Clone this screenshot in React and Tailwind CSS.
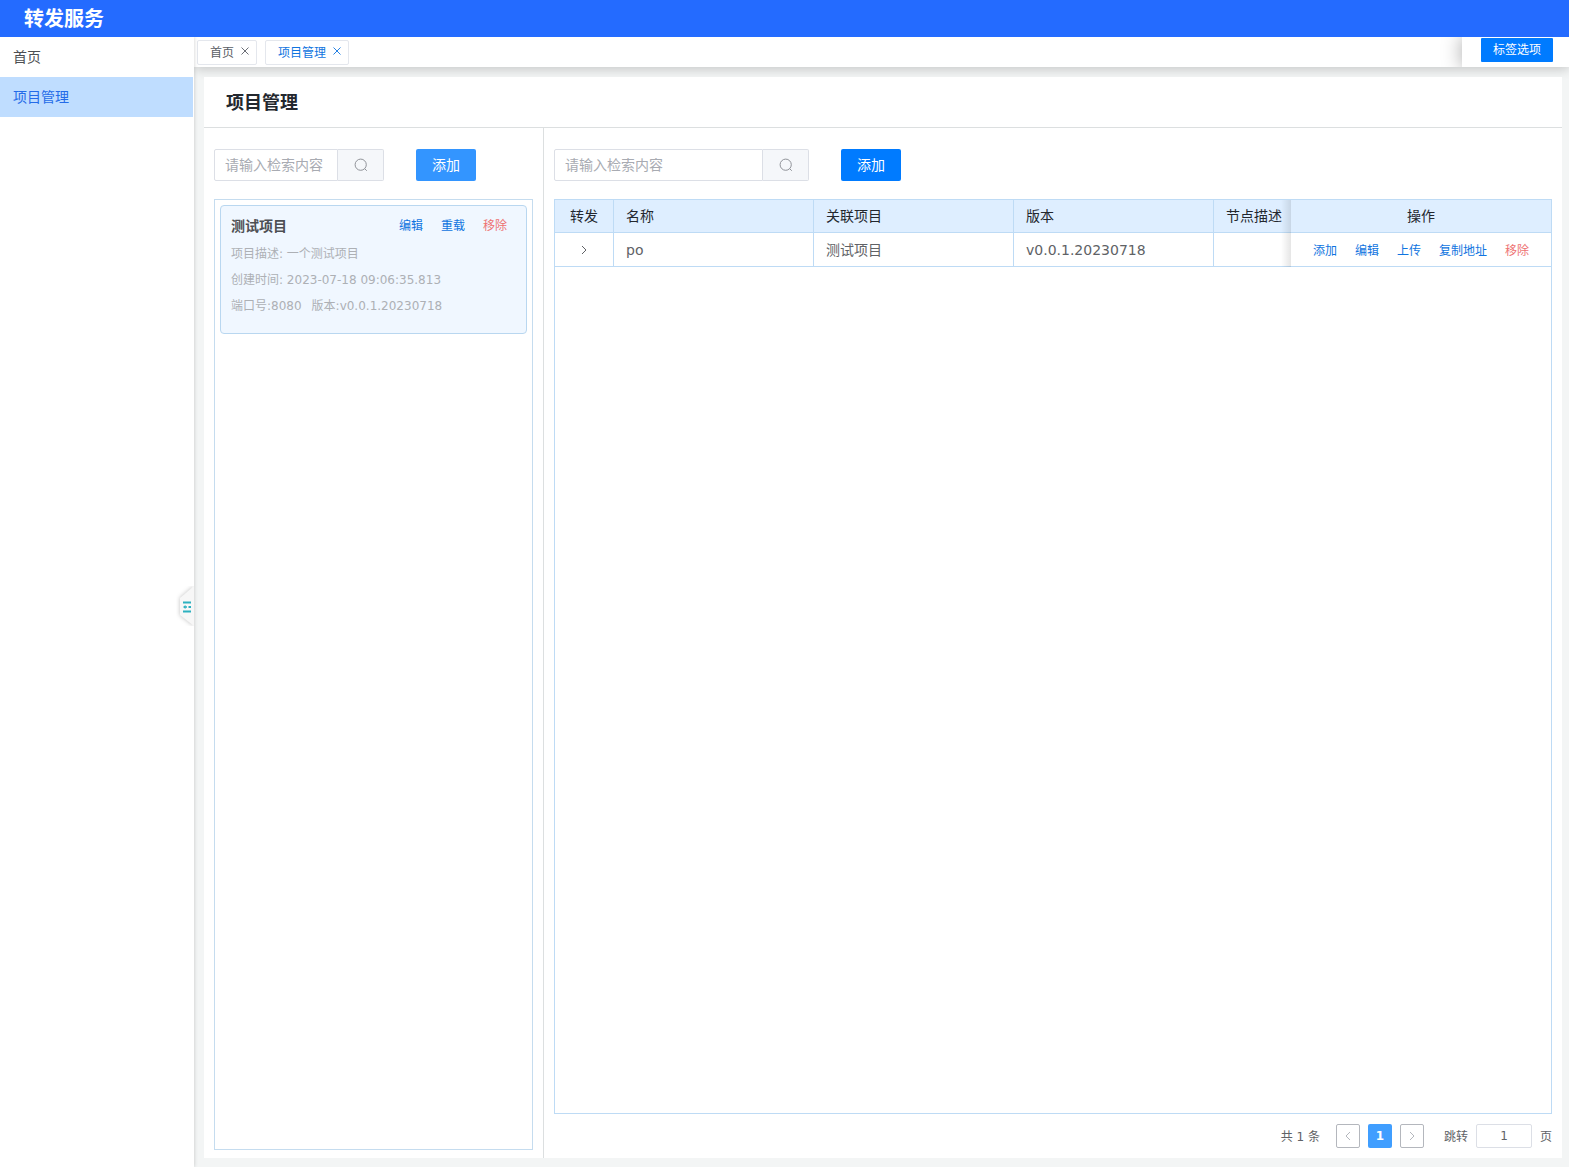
import { useState } from "react";

const navItems = ["首页", "项目管理"];

const columns = [
  { title: "转发", width: "w-[59px]", align: "text-center" },
  { title: "名称", width: "w-[200px]", align: "text-left" },
  { title: "关联项目", width: "w-[200px]", align: "text-left" },
  { title: "版本", width: "w-[200px]", align: "text-left" },
  { title: "节点描述", width: "", align: "text-left" },
];

const rowActions = ["添加", "编辑", "上传", "复制地址"];

const CloseIcon = () => (
  <svg viewBox="0 0 10 10" className="size-2.5" fill="none" stroke="currentColor" strokeWidth="0.9">
    <path d="M1.5 1.5l7 7M8.5 1.5l-7 7" />
  </svg>
);

const SearchIcon = () => (
  <svg viewBox="0 0 14 14" className="size-3.5" fill="none" stroke="currentColor">
    <circle cx="6.7" cy="6.7" r="5.6" />
    <path d="M10.7 10.7l2.1 2.1" />
  </svg>
);

const Chevron = ({ left }) => (
  <svg viewBox="0 0 12 12" className="size-3" fill="none" stroke="currentColor">
    <path d={left ? "M8 2L4 6l4 4" : "M4 2l4 4-4 4"} />
  </svg>
);

const SearchBox = ({ label, width }) => (
  <div className={`flex h-8 ${width}`}>
    <input
      type="text"
      aria-label={label}
      placeholder="请输入检索内容"
      className="min-w-0 flex-1 rounded-l-xs border border-[#dcdfe6] px-2.5 text-sm text-[#606266] outline-none placeholder:text-[#a8abb2]"
    />
    <button
      type="button"
      aria-label="搜索"
      className="grid w-[46px] place-items-center rounded-r-xs border border-l-0 border-[#dcdfe6] bg-[#f5f7fa] text-[#909399]"
    >
      <SearchIcon />
    </button>
  </div>
);

const Tab = ({ title, active }) => (
  <div
    className={`flex h-[25px] items-center rounded-xs border border-[#e4e7ed] pl-3 pr-1.5 text-xs ${
      active ? "text-[#0f74e0]" : "text-[#5a5e66]"
    }`}
  >
    <button type="button" className="pt-0.5">{title}</button>
    <button type="button" aria-label="关闭" className="mb-0.5 ml-1.5">
      <CloseIcon />
    </button>
  </div>
);

const ProjectCard = () => (
  <article className="rounded border border-[#b9d7f0] bg-[#f0f7ff] px-2.5 pt-1.5 pb-3.5">
    <div className="flex h-7 items-center justify-between pr-[9px]">
      <h3 className="text-sm font-bold text-[#4d4f53]">测试项目</h3>
      <div className="flex gap-[18px] text-xs text-[#0f74e0]">
        <button type="button">编辑</button>
        <button type="button">重载</button>
        <button type="button" className="text-[#ee7272]">移除</button>
      </div>
    </div>
    <div className="pt-px text-xs leading-[26px] text-[#adb0b5]">
      <p>项目描述: 一个测试项目</p>
      <p>创建时间: 2023-07-18 09:06:35.813</p>
      <p className="flex gap-2.5">
        <span>端口号:8080</span>
        <span>版本:v0.0.1.20230718</span>
      </p>
    </div>
  </article>
);

const NodeTable = () => {
  const cell = "border-r border-b border-[#bedbf5] px-3";
  const fixed =
    "relative w-[260px] border-b border-[#bedbf5] before:absolute before:top-0 before:-bottom-px before:right-full before:w-2.5 before:bg-linear-to-l before:from-black/10 before:to-transparent";

  return (
    <table className="w-full table-fixed border-separate border-spacing-0 text-sm">
      <thead className="bg-[#deeeff] text-[#23272e]">
        <tr className="h-[33px]">
          {columns.map((col, i) => (
            <th
              key={col.title}
              className={`${cell} ${col.width} ${col.align} font-normal whitespace-nowrap ${
                i === 4 ? "border-r-0 pr-0" : ""
              }`}
            >
              {col.title}
            </th>
          ))}
          <th className={`${fixed} text-center font-normal`}>操作</th>
        </tr>
      </thead>
      <tbody className="text-[#606266]">
        <tr className="h-[34px]">
          <td className={cell}>
            <button type="button" aria-label="展开" className="mx-auto block">
              <Chevron />
            </button>
          </td>
          <td className={cell}>po</td>
          <td className={cell}>测试项目</td>
          <td className={cell}>v0.0.1.20230718</td>
          <td className={`${cell} border-r-0`}></td>
          <td className={fixed}>
            <div className="flex justify-center gap-[18px] pt-0.5 text-xs text-[#0f74e0]">
              {rowActions.map((action) => (
                <button key={action} type="button">{action}</button>
              ))}
              <button type="button" className="text-[#ee7272]">移除</button>
            </div>
          </td>
        </tr>
      </tbody>
    </table>
  );
};

const Pagination = () => {
  const [page, setPage] = useState("1");

  return (
    <div className="flex h-6 items-center justify-end text-xs text-[#606266]">
      <span className="pt-0.5">共 1 条</span>
      <div className="mx-4 flex gap-2">
        <button
          type="button"
          aria-label="上一页"
          className="grid size-6 place-items-center rounded-xs border border-[#b4b7bd] text-[#b4b7bd]"
        >
          <Chevron left />
        </button>
        <button type="button" className="size-6 rounded-xs bg-[#409eff] font-bold text-white">1</button>
        <button
          type="button"
          aria-label="下一页"
          className="grid size-6 place-items-center rounded-xs border border-[#b4b7bd] text-[#b4b7bd]"
        >
          <Chevron />
        </button>
      </div>
      <label className="ml-1 flex items-center gap-2">
        <span className="pt-0.5">跳转</span>
        <input
          type="text"
          value={page}
          onChange={(e) => setPage(e.target.value)}
          className="h-6 w-14 rounded-xs border border-[#dcdfe6] text-center outline-none"
        />
        <span className="pt-0.5">页</span>
      </label>
    </div>
  );
};

const App = () => {
  return (
    <div className="flex h-screen flex-col bg-white font-['DejaVu_Sans','Noto_Sans_CJK_SC',sans-serif]">
      <header className="flex h-[37px] shrink-0 items-center bg-[#246bff] px-6">
        <h1 className="text-xl font-bold text-white">转发服务</h1>
      </header>

      <div className="flex min-h-0 flex-1">
        <aside className="relative z-10 w-[194px] shrink-0 bg-white pr-px shadow-[0_0_4px_rgba(0,0,0,0.2)] [clip-path:inset(0_-10px_0_0)]">
          <nav>
            {navItems.map((item, i) => (
              <a
                key={item}
                href="#"
                className={`block h-10 px-[13px] text-sm leading-10 ${
                  i === 1 ? "bg-[#bfddff] text-[#246be8]" : "text-[#4d4f53]"
                }`}
              >
                {item}
              </a>
            ))}
          </nav>
          <button
            type="button"
            aria-label="收起菜单"
            className="absolute top-1/2 right-0 -mt-4"
          >
            <svg viewBox="0 0 18 40" className="h-10 w-[18px]" fill="none">
              <path
                d="M18 0L4 12v17l14 11z"
                fill="#f7f7f7"
                className="drop-shadow-[0_0_2px_rgba(0,0,0,0.25)]"
              />
              <path d="M7 16.5h8M7 25.5h8M12.5 21H15" stroke="#2cb1c0" strokeWidth="2" />
              <path d="M7 21l2.5-2v1.2H11v1.6H9.500V23z" fill="#2cb1c0" />
            </svg>
          </button>
        </aside>

        <div className="flex min-w-0 flex-1 flex-col bg-[#f3f5f5]">
          <div className="flex h-[30px] shrink-0 justify-between bg-white shadow-[0_2px_12px_rgba(0,0,0,0.2)] [clip-path:inset(0_0_-14px_0)]">
            <div className="flex items-center gap-2 pl-[3px]">
              <Tab title="首页" />
              <Tab title="项目管理" active />
            </div>
            <div className="bg-white pr-4 pl-[19px] shadow-[0_0_20px_rgba(0,0,0,0.35)] [clip-path:inset(0_0_0_-24px)]">
              <button type="button" className="mt-px block h-6 rounded-[1px] bg-[#007bff] px-3 text-xs text-white">
                标签选项
              </button>
            </div>
          </div>

          <main className="relative mt-2.5 mr-[7px] mb-[9px] ml-2.5 flex min-h-0 flex-1 flex-col bg-white">
            <h2 className="h-[51px] shrink-0 border-b border-[#dcdfe0] px-[22px] text-lg leading-[52px] font-bold text-[#23272e]">
              项目管理
            </h2>

            <div className="flex min-h-0 flex-1">
              <section className="flex w-[340px] shrink-0 flex-col border-r border-[#dcdfe0] px-2.5 pt-[21px] pb-2">
                <div className="flex gap-8">
                  <SearchBox label="检索项目" width="w-[170px]" />
                  <button type="button" className="h-8 rounded-xs bg-[#3395ff] px-4 text-sm text-white">
                    添加
                  </button>
                </div>
                <div className="mt-[18px] flex-1 border border-[#c5dcef] p-[5px]">
                  <ProjectCard />
                </div>
              </section>

              <section className="flex min-w-0 flex-1 flex-col px-2.5 pt-[21px] pb-2.5">
                <div className="flex gap-8">
                  <SearchBox label="检索节点" width="w-[255px]" />
                  <button type="button" className="h-8 rounded-xs bg-[#007bff] px-4 text-sm text-white">
                    添加
                  </button>
                </div>
                <div className="mt-[18px] mb-2.5 flex-1 border border-[#bedbf5]">
                  <NodeTable />
                </div>
                <Pagination />
              </section>
            </div>
          </main>
        </div>
      </div>
    </div>
  );
};

export default App;
